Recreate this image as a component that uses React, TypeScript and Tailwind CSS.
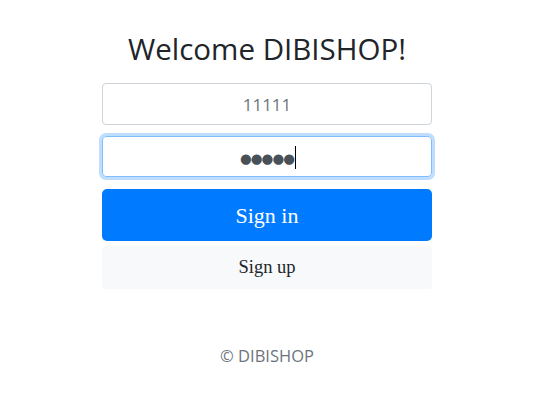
export default function App() {
  return (
    <div className="min-h-[413px] bg-white font-['Open_Sans',sans-serif]">
      <div className="ml-[102px] w-[330px] pt-[28px] text-center">
        <h1 className="text-[29.5px] leading-[42px] font-normal text-[#212529]">
          Welcome DIBISHOP!
        </h1>
        <form className="mt-[13px] flex flex-col">
          <input
            type="text"
            placeholder="11111"
            className="h-[42px] w-full rounded-[4px] border border-[#ced4da] px-3 text-center text-[17px] text-[#495057] placeholder:text-[#6c757d]"
          />
          <div className="relative mt-[11px]">
            <input
              type="text"
              value="●●●●●"
              readOnly
              aria-label="Password"
              className="h-[41px] w-full rounded-[4px] border border-[#80bdff] px-3 pt-[3px] text-center font-['DejaVu_Sans',sans-serif] text-[13.5px] tracking-[-1px] text-[#495057] shadow-[0_0_0_3px_rgba(0,123,255,0.25)] outline-none"
            />
            <span className="absolute left-[193px] top-[10px] h-[23px] w-px bg-black" />
          </div>
          <button
            type="button"
            className="mt-[12px] h-[52px] w-full rounded-[5px] bg-[#007bff] font-['Liberation_Serif',serif] text-[22px] text-white"
          >
            Sign in
          </button>
          <button
            type="button"
            className="mt-[5px] h-[43px] w-full rounded-[4px] bg-[#f8f9fa] font-['Liberation_Serif',serif] text-[18.5px] text-[#212529]"
          >
            Sign up
          </button>
        </form>
        <p className="mt-[55px] text-[16.5px] text-[#6c757d]">© DIBISHOP</p>
      </div>
    </div>
  );
}
